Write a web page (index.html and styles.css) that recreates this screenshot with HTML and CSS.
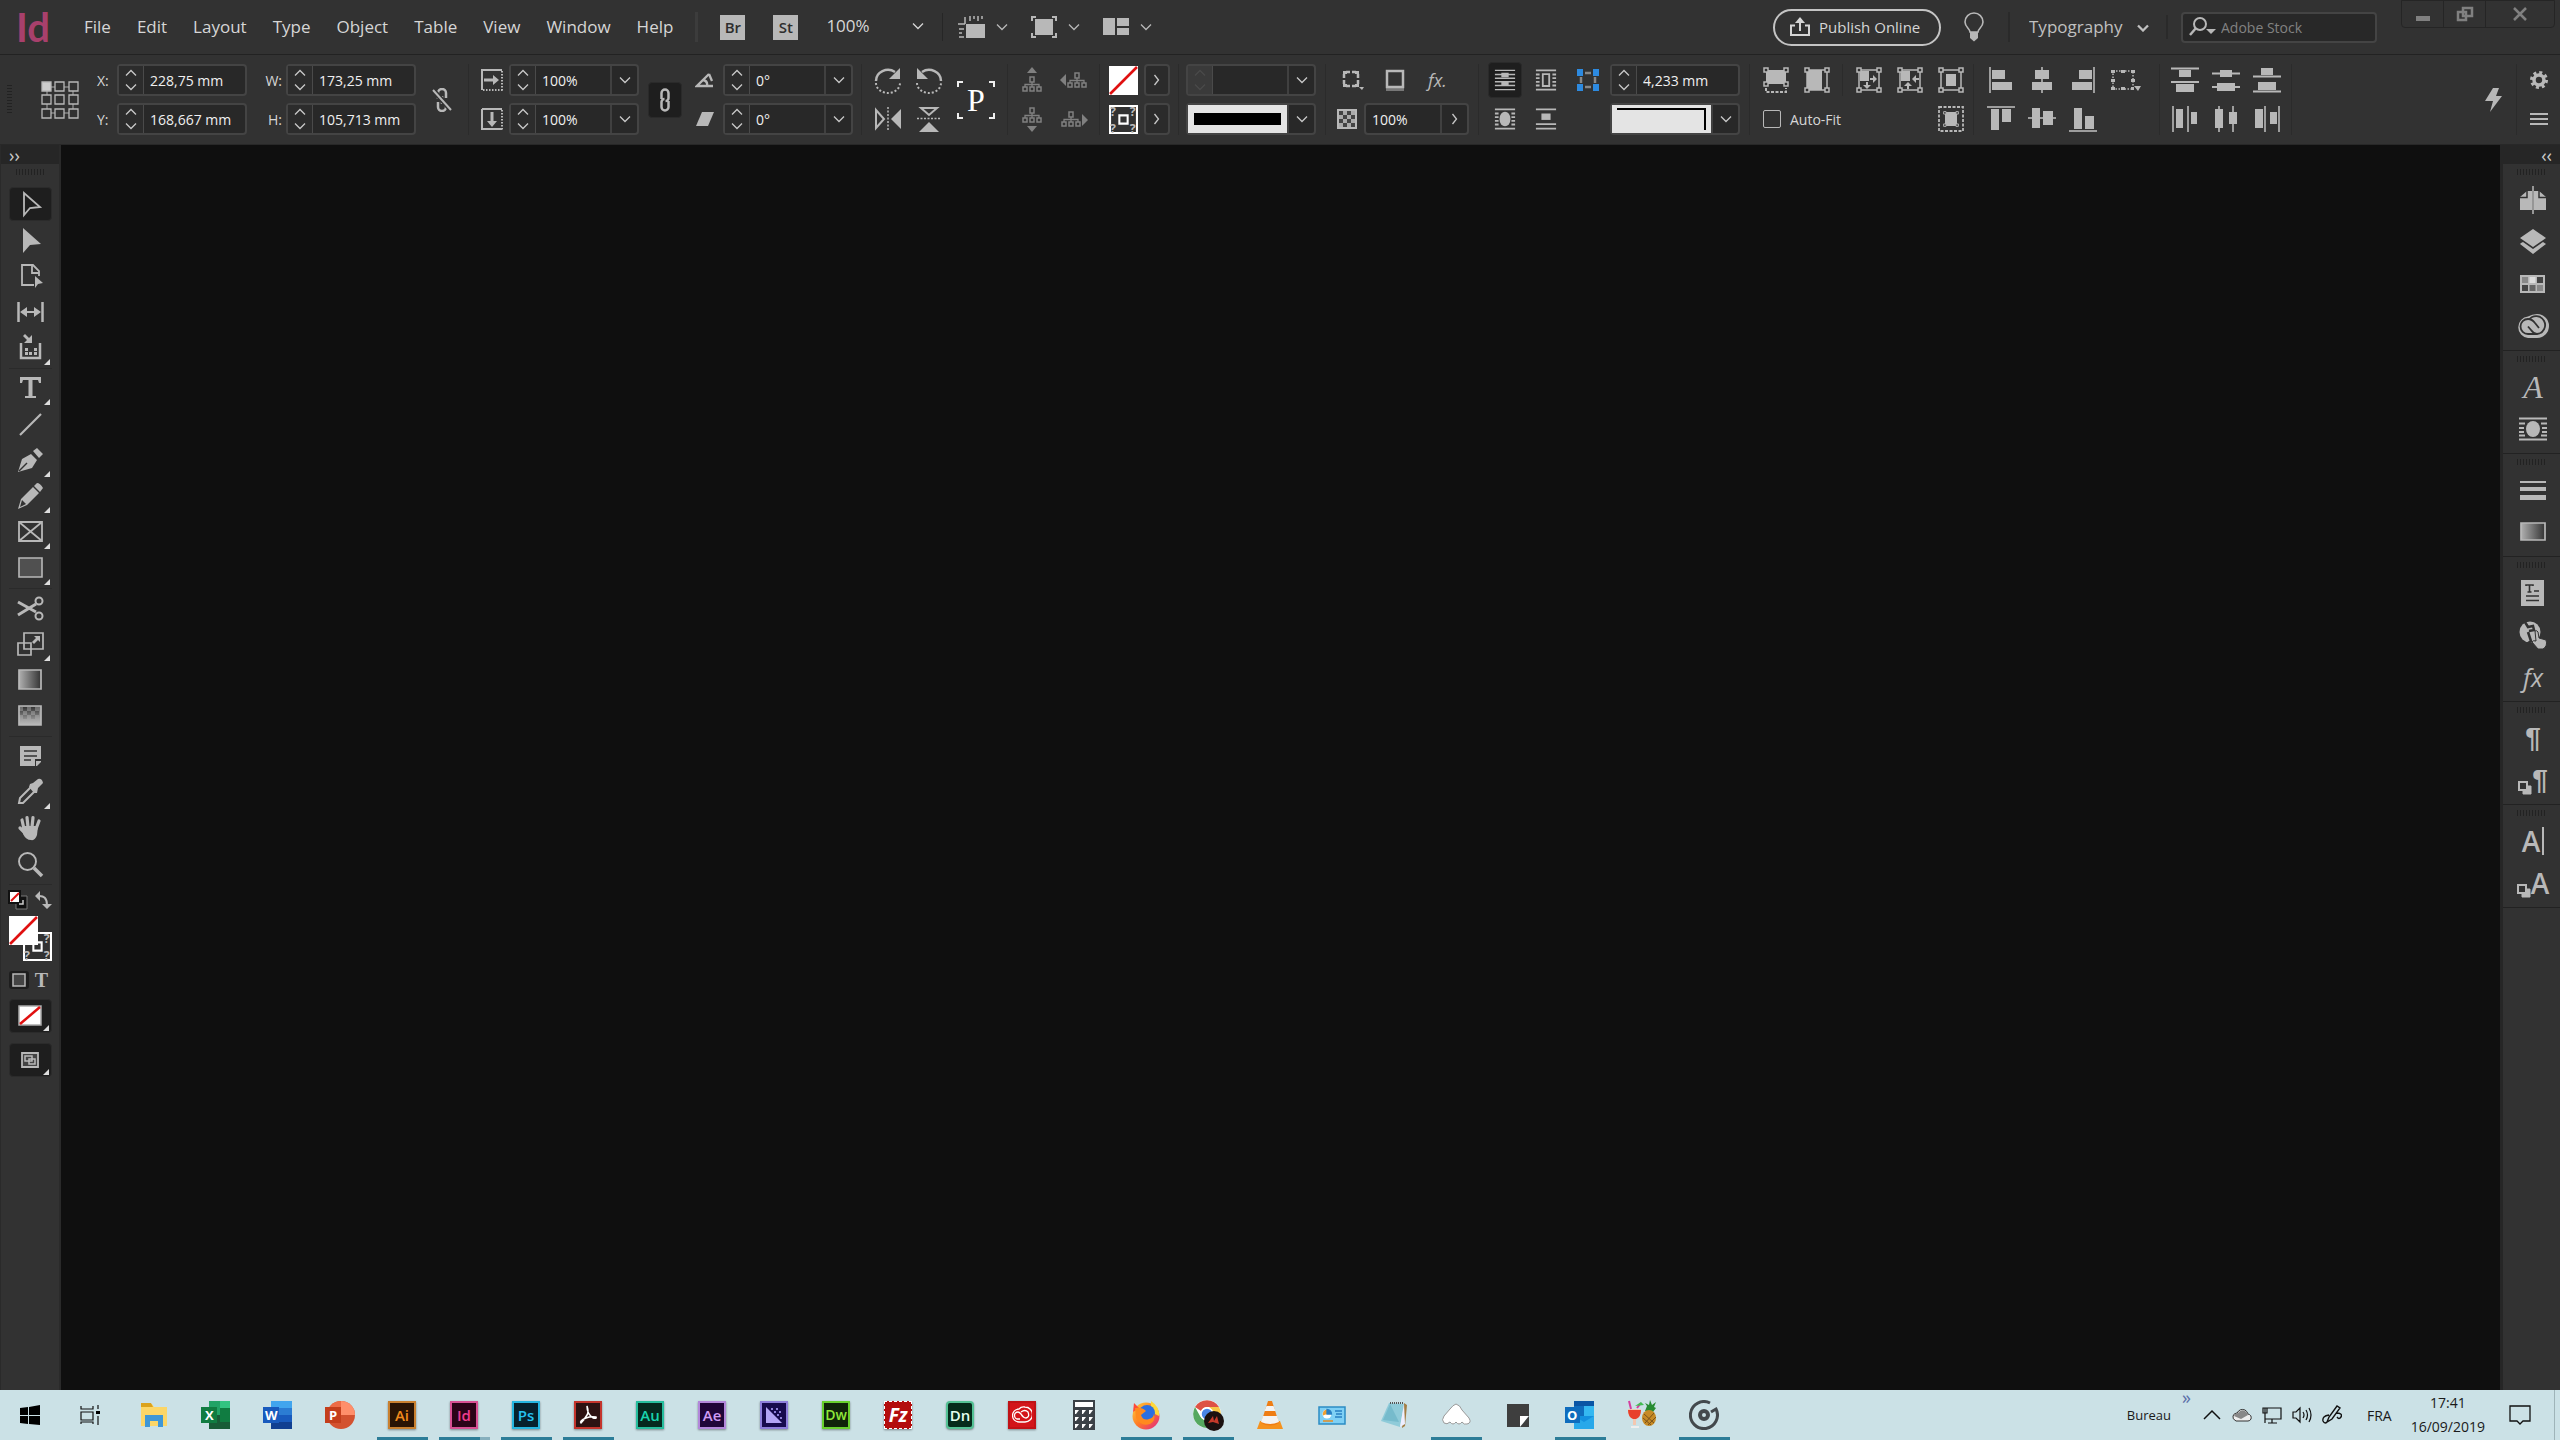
FILE: index.html
```html
<!DOCTYPE html>
<html lang="en">
<head>
    <meta charset="UTF-8">
    <meta name="viewport" content="width=device-width, initial-scale=1.0">
    <title>InDesign</title>
    <link rel="stylesheet" href="styles.css">
</head>
<body>
    <svg class="defs" aria-hidden="true">
        <defs>
            <linearGradient id="grad"><stop offset="0" stop-color="#b0b0b0"/><stop offset="1" stop-color="#333"/></linearGradient>
            <linearGradient id="grad-v" x2="0" y2="1"><stop offset="0" stop-color="#bbb" stop-opacity="0"/><stop offset="1" stop-color="#bbb"/></linearGradient>
            <linearGradient id="fox" x2="1" y2="1"><stop offset="0" stop-color="#ffd23a"/><stop offset=".5" stop-color="#ff7a26"/><stop offset="1" stop-color="#e0218a"/></linearGradient>
        </defs>
        <symbol id="down" viewBox="0 0 12 8"><path d="M1 1.5l5 5 5-5" fill="none" stroke="currentColor" stroke-width="1.3"/></symbol>
        <symbol id="up" viewBox="0 0 12 8"><path d="M1 6.5l5-5 5 5" fill="none" stroke="currentColor" stroke-width="1.3"/></symbol>
        <symbol id="right" viewBox="0 0 8 12"><path d="M1.5 1l4 5-4 5" fill="none" stroke="currentColor" stroke-width="1.3"/></symbol>
        <symbol id="hierarchy" viewBox="0 0 20 16"><path d="M10 6v3M3 11V8.500h14V11M10 8v3" fill="none" stroke="currentColor" stroke-width="1.3"/><path d="M8 1h4v5H8zM1 11h4v4H1zM8 11h4v4H8zM15 11h4v4h-4z" fill="none" stroke="currentColor" stroke-width="1.5"/></symbol>
        <symbol id="wrap" viewBox="0 0 28 24"><path d="M0 1.500h28M0 22.500h28M0 6.500h6M22 6.500h6M0 11h5M23 11h5M0 15h5M23 15h5M0 18.500h6M22 18.500h6" stroke="currentColor" stroke-width="1.800"/><ellipse cx="14" cy="12" rx="7" ry="8" fill="currentColor"/></symbol>
        <symbol id="handles" viewBox="0 0 26 26"><path d="M1 1h4v4H1zM21 1h4v4h-4zM1 21h4v4H1zM21 21h4v4h-4z" fill="#323232" stroke="currentColor" stroke-width="1.5"/></symbol>
        <symbol id="corner-mark" viewBox="0 0 6 6"><path d="M6 0v6H0z" fill="#ddd"/></symbol>
        <symbol id="none" viewBox="0 0 28 28"><path d="M0 0h28v28H0z" fill="#fff"/><path d="M1 27L27 1" stroke="#e01010" stroke-width="2.500"/></symbol>
        <symbol id="page-squares" viewBox="0 0 14 14"><path d="M5 5h8v8H5z" fill="currentColor" stroke="currentColor"/><path d="M1 1h8v8H1z" fill="#323232" stroke="currentColor" stroke-width="2"/></symbol>
        <symbol id="cc" viewBox="0 0 32 24"><path d="M11 2.500Q15 0 20 0a12 12 0 1 1 0 24h-9a10.800 10.800 0 0 1 0-21.500z" fill="currentColor"/><path d="M20 20h-9a7.500 7.500 0 0 1 0-15q4 0 7 4l4 5M12 5.500A9 9 0 1 1 20 20q-3 0-6-4l-3-3.500" fill="none" stroke="#323232" stroke-width="1.800"/></symbol>
    </svg>

    <header class="menubar">
        <div class="logo">Id</div>
        <nav class="menu">
            <a href="#">File</a>
            <a href="#">Edit</a>
            <a href="#">Layout</a>
            <a href="#">Type</a>
            <a href="#">Object</a>
            <a href="#">Table</a>
            <a href="#">View</a>
            <a href="#">Window</a>
            <a href="#">Help</a>
        </nav>
        <div class="menu-tools">
            <button class="app-chip">Br</button>
            <button class="app-chip">St</button>
            <div class="select zoom">
                <select aria-label="Zoom level"><option>100%</option></select>
                <svg class="chev"><use href="#down"/></svg>
            </div>
        </div>
        <div class="view-tools">
            <button class="view-btn" aria-label="View options">
                <svg class="icon28" viewBox="0 0 28 28"><path d="M8 11h19v14H8z" fill="currentColor"/><path d="M7 4v7M12 3v5M16 3v3M20 3v5M24 3v3M0 11h7M1 16h5M1 20h3M1 24h5" stroke="currentColor" stroke-width="1.500"/></svg>
                <svg class="chev"><use href="#down"/></svg>
            </button>
            <button class="view-btn" aria-label="Screen mode">
                <svg class="icon28" viewBox="0 0 28 28"><path d="M5 6h18v16H5z" fill="currentColor"/><path d="M2 8V4h4M22 4h4v4M26 20v4h-4M6 24H2v-4" fill="none" stroke="currentColor" stroke-width="2"/></svg>
                <svg class="chev"><use href="#down"/></svg>
            </button>
            <button class="view-btn" aria-label="Arrange documents">
                <svg class="icon28" viewBox="0 0 28 28"><path d="M1 5h12v17H1zM15 5h12v8H15zM15 15h12v7H15z" fill="currentColor"/></svg>
                <svg class="chev"><use href="#down"/></svg>
            </button>
        </div>
        <div class="menu-right">
            <button class="publish">
                <svg class="icon20" viewBox="0 0 20 20"><path d="M5 8.500H1V18h18V8.500h-4M10 14V4" fill="none" stroke="currentColor" stroke-width="2"/><path d="M5 6l5-6 5 6z" fill="currentColor"/></svg>
                Publish Online
            </button>
            <button class="bulb" aria-label="Learn">
                <svg viewBox="0 0 20 30"><path d="M6 20c0-3-5-5-5-10a9 9 0 0 1 18 0c0 5-5 7-5 10z" fill="none" stroke="currentColor" stroke-width="1.600"/><path d="M6 20h8v6l-4 3.500L6 26z" fill="currentColor"/></svg>
            </button>
            <div class="select workspace-select">
                <select aria-label="Workspace"><option>Typography</option></select>
                <svg class="chev" viewBox="0 0 12 8"><path d="M1 1.500l5 5 5-5" fill="none" stroke="currentColor" stroke-width="2.300"/></svg>
            </div>
            <label class="search">
                <svg viewBox="0 0 28 20"><circle cx="11" cy="7" r="6" fill="none" stroke="currentColor" stroke-width="2"/><path d="M7 11l-6 7" stroke="currentColor" stroke-width="2.500"/><path d="M17 12h10l-5 5z" fill="currentColor"/></svg>
                <input type="search" placeholder="Adobe Stock" aria-label="Adobe Stock">
            </label>
            <div class="window-buttons">
                <button aria-label="Minimize"><svg viewBox="0 0 20 16"><path d="M3 10h14v5H3z" fill="currentColor"/></svg></button>
                <button aria-label="Restore"><svg viewBox="0 0 20 16"><path d="M8 2h9v8H8zM3 6h8v8H3z" fill="none" stroke="currentColor" stroke-width="2.500"/></svg></button>
                <button aria-label="Close"><svg viewBox="0 0 20 16"><path d="M4 2l12 12M16 2L4 14" stroke="currentColor" stroke-width="2.500"/></svg></button>
            </div>
        </div>
    </header>

    <section class="control">
        <div class="group position">
            <span class="grip-v tall"></span>
            <svg class="tall ref-point" viewBox="0 0 38 38"><path d="M6 6h26v26H6z" fill="none" stroke="#aaa"/><g fill="#323232" stroke="#b8b8b8" stroke-width="1.300"><path d="M1 1h9v9H1z" fill="#ccc"/><path d="M14 1h9v9h-9zM28 1h9v9h-9zM1 14h9v9H1zM14 14h9v9h-9zM28 14h9v9h-9zM1 28h9v9H1zM14 28h9v9h-9zM28 28h9v9h-9z"/></g></svg>
            <label for="x">X:</label>
            <div class="field"><span class="spin"><button aria-label="Increase"><svg><use href="#up"/></svg></button><button aria-label="Decrease"><svg><use href="#down"/></svg></button></span><input id="x" value="228,75 mm"></div>
            <label for="w" class="end">W:</label>
            <div class="field"><span class="spin"><button aria-label="Increase"><svg><use href="#up"/></svg></button><button aria-label="Decrease"><svg><use href="#down"/></svg></button></span><input id="w" value="173,25 mm"></div>
            <button class="tall flat" aria-label="Constrain proportions"><svg class="icon24" viewBox="0 0 24 24"><path d="M8 11V5a4 4 0 0 1 8 0v5M8 14v5a4 4 0 0 0 8 0v-4M12 8v8" fill="none" stroke="currentColor" stroke-width="2.500"/><path d="M3 2l18 20" stroke="#323232" stroke-width="5"/><path d="M3 2l18 20" stroke="currentColor" stroke-width="2"/></svg></button>
            <label for="y">Y:</label>
            <div class="field"><span class="spin"><button aria-label="Increase"><svg><use href="#up"/></svg></button><button aria-label="Decrease"><svg><use href="#down"/></svg></button></span><input id="y" value="168,667 mm"></div>
            <label for="h" class="end">H:</label>
            <div class="field"><span class="spin"><button aria-label="Increase"><svg><use href="#up"/></svg></button><button aria-label="Decrease"><svg><use href="#down"/></svg></button></span><input id="h" value="105,713 mm"></div>
        </div>

        <div class="group scale">
            <svg class="icon22" viewBox="0 0 22 22"><path d="M21 1H1v20" fill="none" stroke="currentColor" stroke-width="2"/><path d="M21 2v20M2 21h20" stroke="currentColor" stroke-width="2" stroke-dasharray="1.500 1.500"/><path d="M3 9.500h9V6l6 5-6 5v-3.500H3z" fill="currentColor"/></svg>
            <div class="field"><span class="spin"><button aria-label="Increase"><svg><use href="#up"/></svg></button><button aria-label="Decrease"><svg><use href="#down"/></svg></button></span><input aria-label="Scale X" value="100%"><button class="drop" aria-label="Presets"><svg class="chev"><use href="#down"/></svg></button></div>
            <button class="tall toggled link" aria-label="Link scale"><svg class="icon24" viewBox="0 0 24 24"><path d="M8.500 11V5a3.500 3.500 0 0 1 7 0v5a3 3 0 0 1-3 3M15.500 13v6a3.500 3.500 0 0 1-7 0v-5a3 3 0 0 1 3-3" fill="none" stroke="currentColor" stroke-width="2.500"/></svg></button>
            <svg class="icon20" viewBox="0 0 20 20"><path d="M14 4L2 16h16M8 10q5 1 4 6M14 4l3 7" fill="none" stroke="currentColor" stroke-width="2.300"/></svg>
            <div class="field"><span class="spin"><button aria-label="Increase"><svg><use href="#up"/></svg></button><button aria-label="Decrease"><svg><use href="#down"/></svg></button></span><input aria-label="Rotation" value="0°"><button class="drop" aria-label="Presets"><svg class="chev"><use href="#down"/></svg></button></div>
            <svg class="icon22" viewBox="0 0 22 22"><path d="M1 1h20M1 1v20h20" fill="none" stroke="currentColor" stroke-width="2"/><path d="M21 2v20" stroke="currentColor" stroke-width="2" stroke-dasharray="1.500 1.500"/><path d="M9.500 4v9H6l5 6 5-6h-3.500V4z" fill="currentColor"/></svg>
            <div class="field"><span class="spin"><button aria-label="Increase"><svg><use href="#up"/></svg></button><button aria-label="Decrease"><svg><use href="#down"/></svg></button></span><input aria-label="Scale Y" value="100%"><button class="drop" aria-label="Presets"><svg class="chev"><use href="#down"/></svg></button></div>
            <svg class="icon20" viewBox="0 0 20 20"><path d="M7 3h12l-6 14H1z" fill="currentColor"/></svg>
            <div class="field"><span class="spin"><button aria-label="Increase"><svg><use href="#up"/></svg></button><button aria-label="Decrease"><svg><use href="#down"/></svg></button></span><input aria-label="Shear" value="0°"><button class="drop" aria-label="Presets"><svg class="chev"><use href="#down"/></svg></button></div>
        </div>

        <div class="group transform">
            <button class="flat" aria-label="Rotate clockwise"><svg class="icon28" viewBox="0 0 28 28"><path d="M2 15A12 11 0 0 1 21 6" fill="none" stroke="currentColor" stroke-width="2.500"/><path d="M26 2v11H15z" fill="currentColor"/><path d="M2 17a12 10 0 0 0 24 0" fill="none" stroke="currentColor" stroke-width="2" stroke-dasharray="2 2"/></svg></button>
            <button class="flat" aria-label="Rotate counterclockwise"><svg class="icon28" viewBox="0 0 28 28"><path d="M26 15A12 11 0 0 0 7 6" fill="none" stroke="currentColor" stroke-width="2.500"/><path d="M2 2v11h11z" fill="currentColor"/><path d="M2 17a12 10 0 0 0 24 0" fill="none" stroke="currentColor" stroke-width="2" stroke-dasharray="2 2"/></svg></button>
            <div class="tall proxy">P</div>
            <button class="flat" aria-label="Flip horizontal"><svg class="icon28" viewBox="0 0 28 28"><path d="M2 5l8 9-8 9z" fill="none" stroke="currentColor" stroke-width="2"/><path d="M27 4v20L17 14z" fill="currentColor"/><path d="M14 2v24" stroke="currentColor" stroke-width="1.500" stroke-dasharray="2 1.500"/></svg></button>
            <button class="flat" aria-label="Flip vertical"><svg class="icon28" viewBox="0 0 28 28"><path d="M6 3h16l-8 7z" fill="none" stroke="currentColor" stroke-width="2"/><path d="M4 27h20l-10-10z" fill="currentColor"/><path d="M2 13.500h24" stroke="currentColor" stroke-width="1.500" stroke-dasharray="2 1.500"/></svg></button>
        </div>

        <div class="group hierarchy dim">
            <svg class="icon28" viewBox="0 0 28 28"><path d="M9 7h10l-5-6z" fill="currentColor"/><use href="#hierarchy" x="4" y="10" width="20" height="16"/></svg>
            <svg class="icon28" viewBox="0 0 28 28"><path d="M6 8v12l-6-6z" fill="currentColor"/><use href="#hierarchy" x="7" y="6" width="20" height="16"/></svg>
            <svg class="icon28" viewBox="0 0 28 28"><path d="M9 21h10l-5 6z" fill="currentColor"/><use href="#hierarchy" x="4" y="2" width="20" height="16"/></svg>
            <svg class="icon28" viewBox="0 0 28 28"><path d="M22 9v12l6-6z" fill="currentColor"/><use href="#hierarchy" x="1" y="6" width="20" height="16"/></svg>
        </div>

        <div class="group fill">
            <button class="swatch" aria-label="Fill"><svg><use href="#none"/></svg></button>
            <button class="box" aria-label="Fill options"><svg class="chev-r"><use href="#right"/></svg></button>
            <button class="swatch" aria-label="Stroke"><svg class="mixed" viewBox="0 0 28 28"><path d="M1 1h26v26H1zM10 10h8v8h-8z"/><text x="1" y="11">?</text><text x="20" y="11">?</text><text x="1" y="27">?</text><text x="20" y="27">?</text></svg></button>
            <button class="box" aria-label="Stroke options"><svg class="chev-r"><use href="#right"/></svg></button>
        </div>

        <div class="group stroke">
            <div class="field off"><span class="spin"><button aria-label="Increase" disabled><svg><use href="#up"/></svg></button><button aria-label="Decrease" disabled><svg><use href="#down"/></svg></button></span><input aria-label="Stroke weight" value=""><button class="drop" aria-label="Presets"><svg class="chev"><use href="#down"/></svg></button></div>
            <div class="field"><button class="preview line" aria-label="Stroke type"><span></span></button><button class="drop" aria-label="Stroke types"><svg class="chev"><use href="#down"/></svg></button></div>
        </div>

        <div class="group effects">
            <div class="row">
                <button class="flat" aria-label="Corner options"><svg class="icon24" viewBox="0 0 24 24"><path d="M6 4h4M12 4h4M4 6v4M4 12v4M18 6v4M18 12v4M6 18h4M12 18h4" stroke="currentColor" stroke-width="2.500"/><path d="M3 3h4v3H3zM15 3h4v3h-4zM3 16h4v3H3zM15 16h4v3h-4zM19 19h5l-2 3z" fill="currentColor"/></svg></button>
                <button class="flat" aria-label="Drop shadow"><svg class="icon24" viewBox="0 0 24 24"><path d="M3 17h18v6H3z" fill="#777"/><path d="M4 3h16v16H4z" fill="#323232" stroke="currentColor" stroke-width="2.500"/></svg></button>
                <button class="flat fx" aria-label="Effects">fx.</button>
            </div>
            <div class="row">
                <svg class="icon20 checker" viewBox="0 0 20 20"><path d="M1 1h18v18H1z" fill="#444" stroke="currentColor" stroke-width="2"/><path d="M6 2h4v4H6zM14 2h4v4h-4zM2 6h4v4H2zM10 6h4v4h-4zM6 10h4v4H6zM14 10h4v4h-4zM2 14h4v4H2zM10 14h4v4h-4z" fill="#aaa"/></svg>
                <div class="field opacity"><input aria-label="Opacity" value="100%"><button class="drop" aria-label="Opacity slider"><svg class="chev-r"><use href="#right"/></svg></button></div>
            </div>
        </div>

        <div class="group wrap">
            <button class="toggled" aria-label="No text wrap"><svg class="icon22" viewBox="0 0 22 24"><path d="M0 1.500h22M0 6h22M0 10h22M0 14h22M0 18h22M0 22.500h22" stroke="currentColor" stroke-width="1.600"/><path d="M7 4h8v5H7zM7 13h8v5H7z" fill="currentColor"/></svg></button>
            <button class="flat" aria-label="Wrap around bounding box"><svg class="icon22" viewBox="0 0 22 24"><path d="M0 1.500h22M0 22.500h22M0 6h4M18 6h4M0 10h4M18 10h4M0 14h4M18 14h4M0 18h4M18 18h4" stroke="currentColor" stroke-width="2"/><path d="M7.500 5.500h7v13h-7z" fill="none" stroke="currentColor" stroke-width="2"/></svg></button>
            <svg class="icon22" viewBox="0 0 22 22"><path d="M0 0h6v7H0zM16 0h6v7h-6zM0 15h6v7H0zM16 15h6v7h-6z" fill="#2d8ae0"/><path d="M8 4h6M8 18h6M4 8v6M18 8v6" stroke="#888" stroke-width="2.500"/></svg>
            <div class="field"><span class="spin"><button aria-label="Increase"><svg><use href="#up"/></svg></button><button aria-label="Decrease"><svg><use href="#down"/></svg></button></span><input aria-label="Corner size" value="4,233 mm"></div>
            <button class="flat" aria-label="Wrap around shape"><svg class="icon22" viewBox="0 0 22 24"><path d="M0 1.500h22M0 22.500h22M0 6h4M18 6h4M0 10h4M18 10h4M0 14h4M18 14h4M0 18h4M18 18h4" stroke="currentColor" stroke-width="2"/><ellipse cx="11" cy="12" rx="6" ry="8" fill="currentColor"/></svg></button>
            <button class="flat" aria-label="Jump object"><svg class="icon22" viewBox="0 0 22 24"><path d="M0 1.500h22M0 17.500h22M0 22.500h22" stroke="currentColor" stroke-width="2"/><path d="M6 6h10v7H6z" fill="currentColor"/></svg></button>
            <span></span>
            <div class="field"><button class="preview corner" aria-label="Corner shape"><span></span></button><button class="drop" aria-label="Corner shapes"><svg class="chev"><use href="#down"/></svg></button></div>
        </div>

        <div class="group fit">
            <div class="row">
                <button class="flat" aria-label="Fill frame"><svg class="icon26" viewBox="0 0 26 26"><path d="M3 3h20v14H3z" fill="currentColor"/><path d="M3 21v4h20v-4" fill="none" stroke="currentColor" stroke-width="2" stroke-dasharray="3 1.500"/><path d="M1 1h4v4H1zM21 1h4v4h-4zM1 15h4v4H1zM21 15h4v4h-4z" fill="#323232" stroke="currentColor" stroke-width="1.500"/></svg></button>
                <button class="flat" aria-label="Fit content"><svg class="icon26" viewBox="0 0 26 26"><path d="M3 3h15v20H3z" fill="currentColor"/><path d="M3 3h20v20H3z" fill="none" stroke="currentColor" stroke-width="1.500"/><use href="#handles" width="26" height="26"/></svg></button>
                <span class="mini-sep"></span>
                <button class="flat" aria-label="Fit content to frame"><svg class="icon26" viewBox="0 0 26 26"><path d="M3 3h20v20H3z" fill="none" stroke="currentColor" stroke-width="1.500"/><path d="M4 4h9v10H4zM14 11h3V8l4 4-4 4v-3h-3zM10 15v3H7l4 4 4-4h-3v-3z" fill="currentColor"/><use href="#handles" width="26" height="26"/></svg></button>
                <button class="flat" aria-label="Fit frame to content"><svg class="icon26" viewBox="0 0 26 26"><path d="M3 3h20v20H3z" fill="none" stroke="currentColor" stroke-width="1.500"/><path d="M4 4h9v10H4zM22 11h-3V8l-4 4 4 4v-3h3zM10 22v-3H7l4-4 4 4h-3v3z" fill="currentColor"/><use href="#handles" width="26" height="26"/></svg></button>
                <button class="flat" aria-label="Center content"><svg class="icon26" viewBox="0 0 26 26"><path d="M3 3h20v20H3z" fill="none" stroke="currentColor" stroke-width="1.500"/><path d="M8 7h10v12H8z" fill="currentColor"/><use href="#handles" width="26" height="26"/></svg></button>
            </div>
            <div class="row">
                <label class="autofit"><input type="checkbox"> Auto-Fit</label>
                <button class="flat" aria-label="Content-aware fit"><svg class="icon26" viewBox="0 0 26 26"><path d="M1 1h24v24H1z" fill="none" stroke="currentColor" stroke-width="1.800" stroke-dasharray="3 1.500"/><path d="M7 6h12v14H7z" fill="currentColor"/><use href="#handles" x="5" y="5" width="16" height="16"/></svg></button>
            </div>
        </div>

        <div class="group align">
            <button class="flat" aria-label="Align left"><svg class="icon28" viewBox="0 0 28 28"><path d="M3 1v26" stroke="currentColor" stroke-width="1.600"/><path d="M5 4h13v9H5zM5 16h20v8H5z" fill="currentColor"/></svg></button>
            <button class="flat" aria-label="Align center"><svg class="icon28" viewBox="0 0 28 28"><path d="M14 1v26" stroke="currentColor" stroke-width="1.600"/><path d="M7 4h14v9H7zM4 16h20v8H4z" fill="currentColor"/></svg></button>
            <button class="flat" aria-label="Align right"><svg class="icon28" viewBox="0 0 28 28"><path d="M25 1v26" stroke="currentColor" stroke-width="1.600"/><path d="M10 4h13v9H10zM3 16h20v8H3z" fill="currentColor"/></svg></button>
            <button class="flat" aria-label="Align to"><svg class="icon30" viewBox="0 0 30 28"><path d="M2 5h20v18H2z" fill="none" stroke="currentColor" stroke-width="1.500" stroke-dasharray="1.500 1.500"/><path d="M0 4h4v3H0zM10 4h4v3h-4zM20 4h4v3h-4zM0 13h4v3H0zM20 13h4v3h-4zM0 21h4v3H0zM10 21h4v3h-4zM20 21h3v3h-3zM23 20h7l-3 5z" fill="currentColor"/></svg></button>
            <button class="flat" aria-label="Align top"><svg class="icon28" viewBox="0 0 28 28"><path d="M0 2h28" stroke="currentColor" stroke-width="1.600"/><path d="M4 4h8v21H4zM15 4h9v13h-9z" fill="currentColor"/></svg></button>
            <button class="flat" aria-label="Align middle"><svg class="icon28" viewBox="0 0 28 28"><path d="M0 13h28" stroke="currentColor" stroke-width="1.600"/><path d="M4 3h8v20H4zM15 6h10v14H15z" fill="currentColor"/></svg></button>
            <button class="flat" aria-label="Align bottom"><svg class="icon28" viewBox="0 0 28 28"><path d="M0 26h28" stroke="currentColor" stroke-width="1.600"/><path d="M5 3h8v21H5zM16 11h9v13h-9z" fill="currentColor"/></svg></button>
        </div>

        <div class="group distribute">
            <button class="flat" aria-label="Distribute top"><svg class="icon28" viewBox="0 0 28 28"><path d="M0 2.500h28M0 16h28" stroke="currentColor" stroke-width="1.800"/><path d="M8 4h12v7H8zM5 18h18v8H5z" fill="currentColor"/></svg></button>
            <button class="flat" aria-label="Distribute middle"><svg class="icon28" viewBox="0 0 28 28"><path d="M0 7.500h28M0 21h28" stroke="currentColor" stroke-width="1.800"/><path d="M8 4h12v7H8zM5 17h18v8H5z" fill="currentColor"/></svg></button>
            <button class="flat" aria-label="Distribute bottom"><svg class="icon28" viewBox="0 0 28 28"><path d="M0 10.500h28M0 25.500h28" stroke="currentColor" stroke-width="1.800"/><path d="M8 2h12v7H8zM5 16h18v8H5z" fill="currentColor"/></svg></button>
            <button class="flat" aria-label="Distribute left"><svg class="icon28" viewBox="0 0 28 28"><path d="M2 1v26M17 1v26" stroke="currentColor" stroke-width="1.600"/><path d="M5 4h7v19H5zM20 7h6v12h-6z" fill="currentColor"/></svg></button>
            <button class="flat" aria-label="Distribute center"><svg class="icon28" viewBox="0 0 28 28"><path d="M7 1v26M21 1v26" stroke="currentColor" stroke-width="1.600"/><path d="M3 4h8v19H3zM17 7h8v12h-8z" fill="currentColor"/></svg></button>
            <button class="flat" aria-label="Distribute right"><svg class="icon28" viewBox="0 0 28 28"><path d="M12 1v26M26 1v26" stroke="currentColor" stroke-width="1.600"/><path d="M2 4h8v19H2zM17 7h7v12h-7z" fill="currentColor"/></svg></button>
        </div>

        <div class="group quick">
            <button class="tall flat" aria-label="Quick apply"><svg class="icon24" viewBox="0 0 24 24"><path d="M12 0h6l-3 8h6L9 24l3-11H4z" fill="currentColor"/></svg></button>
        </div>
        <div class="group settings">
            <button class="flat" aria-label="Customize control panel"><svg class="icon20" viewBox="0 0 20 20"><circle cx="10" cy="10" r="5" fill="none" stroke="currentColor" stroke-width="3.500"/><circle cx="10" cy="10" r="7.500" fill="none" stroke="currentColor" stroke-width="3" stroke-dasharray="3 2.890"/></svg></button>
            <button class="flat" aria-label="Panel menu"><svg class="icon20" viewBox="0 0 20 20"><path d="M1 5h18M1 10h18M1 15h18" stroke="currentColor" stroke-width="2"/></svg></button>
        </div>
    </section>

    <div class="middle">
        <aside class="tools">
            <button class="panel-head">››</button>
            <span class="grip"></span>
            <div class="tool-group">
                <button class="tool on" aria-label="Selection"><svg class="icon28" viewBox="0 0 28 28"><path d="M8 3v22l6-7 10-1z" fill="none" stroke="currentColor" stroke-width="1.800"/></svg></button>
                <button class="tool" aria-label="Direct selection"><svg class="icon28" viewBox="0 0 28 28"><path d="M7 2v25l7-8 11-1z" fill="currentColor"/></svg></button>
                <button class="tool" aria-label="Page"><svg class="icon28" viewBox="0 0 28 28"><path d="M18 23H6V3h11l6 6v5M16 3v8h7" fill="none" stroke="currentColor" stroke-width="1.800"/><path d="M19 14v12l3-4 5-1z" fill="currentColor"/></svg></button>
                <button class="tool" aria-label="Gap"><svg class="icon28" viewBox="0 0 28 28"><path d="M2.500 4v20M26.500 4v20" stroke="currentColor" stroke-width="2.500"/><path d="M8 14h14" stroke="currentColor" stroke-width="2"/><path d="M11 9v10l-7-5zM18 9v10l7-5z" fill="currentColor"/></svg></button>
                <button class="tool" aria-label="Content collector"><svg class="icon28" viewBox="0 0 28 28"><path d="M5 9v15h19V9" fill="none" stroke="currentColor" stroke-width="2.500"/><path d="M9 14h3v3H9zM18 14h3v3h-3zM9 18h3v3H9zM13 18h3v3h-3zM18 18h3v3h-3zM16 9H8l3-3-4-4 2-2 4 4 3-3z" fill="currentColor"/></svg><svg class="mark"><use href="#corner-mark"/></svg></button>
            </div>
            <div class="tool-group">
                <button class="tool" aria-label="Type"><svg class="icon28" viewBox="0 0 28 28"><path d="M4 3h21v6h-2l-1-3h-5.500v16H20v2h-11v-2h3.500V6H7L6 9H4z" fill="currentColor"/></svg><svg class="mark"><use href="#corner-mark"/></svg></button>
                <button class="tool" aria-label="Line"><svg class="icon28" viewBox="0 0 28 28"><path d="M4 25L25 4" stroke="currentColor" stroke-width="2.200"/></svg></button>
                <button class="tool" aria-label="Pen"><svg class="icon28" viewBox="0 0 28 28"><path d="M2 26l4-13 9-5 6 6-5 8zM17 5l4-3 6 6-4 4z" fill="currentColor"/><path d="M3 25l8-8" stroke="#323232" stroke-width="1.500"/></svg><svg class="mark"><use href="#corner-mark"/></svg></button>
                <button class="tool" aria-label="Pencil"><svg class="icon28" viewBox="0 0 28 28"><path d="M2 27l3-10L17 5l6 6-12 12zM18 4l3-3q3 0 6 5l-3 4z" fill="currentColor"/><path d="M6 18l4 4-6 3z" fill="#323232"/></svg><svg class="mark"><use href="#corner-mark"/></svg></button>
                <button class="tool" aria-label="Rectangle frame"><svg class="icon28" viewBox="0 0 28 28"><path d="M3 4h23v19H3zL26 23M26 4L3 23" fill="none" stroke="currentColor" stroke-width="1.800"/></svg><svg class="mark"><use href="#corner-mark"/></svg></button>
                <button class="tool" aria-label="Rectangle"><svg class="icon28" viewBox="0 0 28 28"><path d="M3 4h23v19H3z" fill="#505050" stroke="currentColor" stroke-width="1.600"/></svg><svg class="mark"><use href="#corner-mark"/></svg></button>
            </div>
            <div class="tool-group">
                <button class="tool" aria-label="Scissors"><svg class="icon28" viewBox="0 0 28 28"><path d="M2 8l18 10M2 21L20 10" stroke="currentColor" stroke-width="3"/><circle cx="23" cy="7" r="3.500" fill="none" stroke="currentColor" stroke-width="2"/><circle cx="23" cy="22" r="3.500" fill="none" stroke="currentColor" stroke-width="2"/></svg></button>
                <button class="tool" aria-label="Free transform"><svg class="icon28" viewBox="0 0 28 28"><path d="M8 3h19v16H8zM2 13h13v12H2z" fill="none" stroke="currentColor" stroke-width="1.700"/><path d="M18 6h6v6l-2-2-4 4-2-2 4-4z" fill="currentColor"/></svg><svg class="mark"><use href="#corner-mark"/></svg></button>
                <button class="tool" aria-label="Gradient swatch"><svg class="icon28" viewBox="0 0 28 28"><path d="M3 4h22v19H3z" fill="url(#grad)" stroke="currentColor" stroke-width="1.700"/></svg></button>
                <button class="tool" aria-label="Gradient feather"><svg class="icon28" viewBox="0 0 28 28"><path d="M3 4h22v19H3z" fill="#666"/><path d="M7 5h4v4H7zM15 5h4v4h-4zM3 9h4v4H3zM11 9h4v4h-4zM19 9h4v4h-4zM7 13h4v4H7zM15 13h4v4h-4z" fill="#2e2e2e"/><path d="M3 4h22v19H3z" fill="url(#grad-v)" stroke="currentColor" stroke-width="1.700"/></svg></button>
            </div>
            <div class="tool-group">
                <button class="tool" aria-label="Note"><svg class="icon28" viewBox="0 0 28 28"><path d="M4 4h21v13h-6v7H4zM25 19v1l-4 4h-1v-5z" fill="currentColor"/><path d="M8 9h13M8 14h13M8 18h7" stroke="#323232" stroke-width="1.600"/></svg></button>
                <button class="tool" aria-label="Eyedropper"><svg class="icon28" viewBox="0 0 28 28"><path d="M15 9L4 20l-1 5 4 0L19 13" fill="none" stroke="currentColor" stroke-width="2"/><path d="M14 6l3-1 5-4q4-1 5 4l-5 5-1 5-3 0-5-6z" fill="currentColor"/></svg><svg class="mark"><use href="#corner-mark"/></svg></button>
                <button class="tool" aria-label="Hand"><svg class="icon28" viewBox="0 0 28 28"><path d="M8 15L6 6M12 13l-1-9.500M16 13l1-9.500M20 15l3-8M9 19l-5-5" stroke="currentColor" stroke-width="3.200" stroke-linecap="round"/><path d="M6 12h16l-1 9q-2 6-6 5-5 0-8-6z" fill="currentColor"/></svg></button>
                <button class="tool" aria-label="Zoom"><svg class="icon28" viewBox="0 0 28 28"><circle cx="11.500" cy="11.500" r="8.500" fill="none" stroke="currentColor" stroke-width="1.900"/><path d="M18 18l8 8" stroke="currentColor" stroke-width="3.500"/></svg></button>
            </div>
            <div class="swatch-mini">
                <button class="flat" aria-label="Default fill and stroke"><svg class="icon20" viewBox="0 0 20 20"><path d="M8 6h11v13H8z" fill="#111" stroke="#777"/><path d="M1 1h11v12H1z" fill="#fff" stroke="#111" stroke-width="2"/><path d="M3 11l8-8" stroke="#e01010" stroke-width="2"/><path d="M11 14h4v-4" fill="none" stroke="#ccc" stroke-width="1.500"/></svg></button>
                <button class="flat" aria-label="Swap fill and stroke"><svg class="icon20" viewBox="0 0 20 20"><path d="M5 6q9-1 9 9" fill="none" stroke="currentColor" stroke-width="2"/><path d="M7 1v10L2 6zM9 14h10l-5 5z" fill="currentColor"/></svg></button>
            </div>
            <div class="swatch-stack">
                <svg class="mixed stroke-sw" viewBox="0 0 28 28"><path d="M1 1h26v26H1zM10 10h8v8h-8z"/><text x="20" y="11">?</text><text x="1" y="27">?</text><text x="20" y="27">?</text></svg>
                <svg class="fill-sw"><use href="#none"/></svg>
            </div>
            <div class="format-row">
                <button class="format on" aria-label="Formatting affects container"><svg class="icon14" viewBox="0 0 14 14"><path d="M1 1h12v12H1z" fill="#444" stroke="currentColor" stroke-width="1.500"/></svg></button>
                <button class="format letter">T</button>
            </div>
            <button class="tool on apply" aria-label="Apply none"><svg class="icon24" viewBox="0 0 24 24"><path d="M1 2h22v19H1z" fill="#fff" stroke="#aaa" stroke-width="1.500"/><path d="M2 20L22 3" stroke="#e01010" stroke-width="2.500"/></svg><svg class="mark"><use href="#corner-mark"/></svg></button>
            <button class="tool on" aria-label="Screen mode"><svg class="icon20" viewBox="0 0 20 20"><path d="M2 3h16v14H2z" fill="#444" stroke="currentColor" stroke-width="1.800"/><path d="M5 6h7v5H5zM9 9h6v5H9z" fill="none" stroke="currentColor" stroke-width="1.500"/></svg><svg class="mark"><use href="#corner-mark"/></svg></button>
        </aside>

        <main class="canvas"></main>

        <aside class="panels">
            <button class="panel-head">‹‹</button>
            <div class="panel-group">
                <span class="grip"></span>
                <button class="panel" aria-label="Pages"><svg class="icon28" viewBox="0 0 28 28"><path d="M1 11l7-6h5v19H1zM27 11l-7-6h-5v19h12z" fill="currentColor"/><path d="M1 11.500h7V5M27 11.500h-7V5" fill="none" stroke="#323232" stroke-width="1.500"/><path d="M14 0v28" stroke="currentColor" stroke-width="1.500"/></svg></button>
                <button class="panel" aria-label="Layers"><svg class="icon28" viewBox="0 0 28 28"><path d="M14 1l13 9-13 9L1 10zM2 15l2-1 10 7 10-7 3 2-13 10L1 16z" fill="currentColor"/></svg></button>
                <button class="panel" aria-label="Swatches"><svg class="icon28" viewBox="0 0 28 28"><path d="M1 5h25v18H1z" fill="currentColor"/><path d="M3 7h6v6H3zM18 15h6v6h-6z" fill="#888"/><path d="M18 7h6v6h-6zM3 15h6v6H3z" fill="#444"/><path d="M10.500 15h6v6h-6z" fill="#666"/><path d="M10.500 7h6v6h-6z" fill="#ddd"/></svg></button>
                <button class="panel" aria-label="CC Libraries"><svg class="icon32"><use href="#cc"/></svg></button>
            </div>
            <div class="panel-group">
                <span class="grip"></span>
                <button class="panel script" aria-label="Glyphs">A</button>
                <button class="panel" aria-label="Text wrap"><svg class="icon28"><use href="#wrap"/></svg></button>
            </div>
            <div class="panel-group">
                <span class="grip"></span>
                <button class="panel" aria-label="Stroke"><svg class="icon28" viewBox="0 0 28 28"><path d="M1 5h26v2H1zM1 11h26v4H1zM1 19h26v5H1z" fill="currentColor"/></svg></button>
                <button class="panel" aria-label="Gradient"><svg class="icon28" viewBox="0 0 28 28"><path d="M2 5h24v17H2z" fill="url(#grad)" stroke="currentColor" stroke-width="1.700"/></svg></button>
            </div>
            <div class="panel-group">
                <span class="grip"></span>
                <button class="panel" aria-label="Articles"><svg class="icon28" viewBox="0 0 28 28"><path d="M2 1h23v26H2z" fill="currentColor"/><path d="M7 17h13M7 21.500h13M15 12h5M7 7V6h7v1M10.500 6v7M8.500 13h4" fill="none" stroke="#323232" stroke-width="1.600"/></svg></button>
                <button class="panel" aria-label="Hyperlinks"><svg class="icon28" viewBox="0 0 28 28"><circle cx="11" cy="11" r="10.500" fill="currentColor"/><path d="M6 1l3 5 5-1 1 4-5 1M9 11l3 9-4 3" fill="none" stroke="#323232" stroke-width="2.500"/><path d="M16 10q2-1 3 1l1 6 7 2q2 6-3 9h-5l-6-7q1-2 4-1z" fill="currentColor" stroke="#323232"/></svg></button>
                <button class="panel fx-large" aria-label="Effects">fx</button>
            </div>
            <div class="panel-group">
                <span class="grip"></span>
                <button class="panel pilcrow" aria-label="Paragraph">¶</button>
                <button class="panel pilcrow" aria-label="Paragraph styles"><svg class="icon14 low"><use href="#page-squares"/></svg>¶</button>
            </div>
            <div class="panel-group">
                <span class="grip"></span>
                <button class="panel character" aria-label="Character"><span class="caret">A</span></button>
                <button class="panel character" aria-label="Character styles"><svg class="icon14 low"><use href="#page-squares"/></svg>A</button>
            </div>
        </aside>
    </div>

    <footer class="taskbar">
        <button class="task sys" aria-label="Start"><svg class="icon20" viewBox="0 0 20 20"><path d="M0 3l8-1v8H0zM9 2l11-2v10H9zM0 11h8v8l-8-1zM9 11h11v9L9 19z"/></svg></button>
        <button class="task sys" aria-label="Task view"><svg class="icon20" viewBox="0 0 20 20"><path d="M1 1v3h12V1M1 7h12v8H1zM1 19v-2h12v2M18 0v4M18 11v9" fill="none" stroke="#111" stroke-width="1.200"/><path d="M16 6h4v3h-4z"/></svg></button>
        <div class="tasks">
            <button class="task" aria-label="File Explorer"><svg class="icon28" viewBox="0 0 28 28"><path d="M1 3h11l2 3h13v19H1z" fill="#fcd667"/><path d="M1 2h10l2 4H1z" fill="#dba21c"/><path d="M5 14h18v12h-5v-6h-8v6H5z" fill="#3f97d6"/></svg></button>
            <button class="task" aria-label="Excel"><svg class="icon30" viewBox="0 0 30 30"><path d="M8 1h11v14H8z" fill="#21a366"/><path d="M19 1h10v7H19z" fill="#33c481"/><path d="M8 15h21v14H8z" fill="#185c37"/><path d="M19 8h10v7H19zM19 15h10v7H19z" fill="#107c41"/><path d="M0 7h16v16H0z" fill="#107c41"/><text x="4" y="20" class="office">X</text></svg></button>
            <button class="task" aria-label="Word"><svg class="icon30" viewBox="0 0 30 30"><path d="M8 1h21v7H8z" fill="#41a5ee"/><path d="M8 8h21v7H8z" fill="#2b7cd3"/><path d="M8 15h21v7H8z" fill="#185abd"/><path d="M8 22h21v7H8z" fill="#103f91"/><path d="M0 7h16v16H0z" fill="#185abd"/><text x="2" y="20" class="office">W</text></svg></button>
            <button class="task" aria-label="PowerPoint"><svg class="icon30" viewBox="0 0 30 30"><circle cx="16" cy="15" r="14" fill="#d35230"/><path d="M16 1a14 14 0 0 1 14 14H16z" fill="#ff8f6b"/><path d="M16 1A14 14 0 0 0 2 15h14z" fill="#ed6c47"/><path d="M0 7h16v16H0z" fill="#c43e1c"/><text x="4" y="20" class="office">P</text></svg></button>
            <button class="task open"><span class="tile ai">Ai</span></button>
            <button class="task open many"><span class="tile id">Id</span></button>
            <button class="task open"><span class="tile ps">Ps</span></button>
            <button class="task open" aria-label="Acrobat"><span class="tile acrobat"><svg class="icon20" viewBox="0 0 20 20"><path d="M9 1q2 6 0 9-3 5-6 8-2-2 5-5 5-2 10-1 1 2-3 1-6-4-6-12z" fill="none" stroke="#fff" stroke-width="1.500"/></svg></span></button>
            <button class="task"><span class="tile au">Au</span></button>
            <button class="task"><span class="tile ae">Ae</span></button>
            <button class="task" aria-label="Media Encoder"><span class="tile me"><svg class="icon20" viewBox="0 0 20 20"><path d="M2 2l16 16H2z" fill="#b3a5f5"/><path d="M7 3h2v2H7zM12 3h2v2h-2zM10 6h2v2h-2zM15 6h2v2h-2zM13 9h2v2h-2zM16 12h2v2h-2z" fill="#8d80d8"/></svg></span></button>
            <button class="task"><span class="tile dw">Dw</span></button>
            <button class="task"><span class="tile fz">Fz</span></button>
            <button class="task"><span class="tile dn">Dn</span></button>
            <button class="task" aria-label="Creative Cloud"><span class="tile ccloud"><svg class="icon20" viewBox="0 0 20 20"><path d="M7 4a6 6 0 0 1 6-2 7.500 7.500 0 0 1 0 15H7A6 6 0 0 1 7 4zM13 13c-3-1-4-6-7-6a3 3 0 0 0 0 7h2M9 7q4-3 7 0 2 5-2 6-3 0-5-4" fill="none" stroke="#fff" stroke-width="1.300"/></svg></span></button>
            <button class="task" aria-label="Calculator"><svg class="icon30" viewBox="0 0 30 30"><path d="M4 0h22v30H4z" fill="#3b4147"/><path d="M6 2h18v5H6zM6 10h4l-3 4H6zM13 10h4l-3 4h-1zM20 10h4l-3 4h-1zM6 17h4l-3 4H6zM13 17h4l-3 4h-1zM20 17h4l-3 4h-1zM6 24h4l-3 4H6zM13 24h4l-3 4h-1zM20 24h4l-3 4h-1z" fill="#fff"/></svg></button>
            <button class="task open" aria-label="Firefox"><svg class="icon30" viewBox="0 0 30 30"><circle cx="15" cy="16" r="13.500" fill="url(#fox)"/><path d="M2 12L3 3l5 5z" fill="#ff4a3a"/><path d="M20 1q9 6 8 15l-8-4z" fill="#ffd83a"/><circle cx="16" cy="13" r="8" fill="#2b6fe0"/><path d="M4 8q7-1 11 3l-5 4q2 6 8 4 5-1 5-6 2 8-4 11-9 3-14-6z" fill="#ff8a1e"/></svg></button>
            <button class="task open" aria-label="Chrome"><svg class="chrome" viewBox="0 0 32 32"><circle cx="15" cy="15" r="14" fill="#fff"/><path d="M3 8a14 14 0 0 1 24 0H15a7 7 0 0 0-6 4z" fill="#de5144"/><path d="M27 8a14 14 0 0 1-12 21l6-10q2-6-4-11z" fill="#f7c846"/><path d="M3 8a14 14 0 0 0 12 21l5-9q-8 4-12-3z" fill="#55a860"/><circle cx="15" cy="15" r="6" fill="#4a86e8" stroke="#fff" stroke-width="1.500"/><circle cx="22" cy="22" r="10" fill="#1b1110"/><path d="M16 24l5-7 1 5 3-5 2 8-6-2z" fill="#c73a2a"/></svg></button>
            <button class="task" aria-label="VLC"><svg class="icon28" viewBox="0 0 28 28"><path d="M4 20h20l3 8H1z" fill="#f5921e"/><path d="M12 0h4l7 22q-9 5-18 0z" fill="#ef7d14"/><path d="M10.500 5h7l2 5h-11zM7 15h14l2 6q-9 4-18 0z" fill="#f3f3f3"/></svg></button>
            <button class="task" aria-label="Control panel"><svg class="icon28" viewBox="0 0 28 28"><path d="M1 6h26v17H1z" fill="#7fd0f5" stroke="#2c8cc4" stroke-width="1.500"/><circle cx="9" cy="13" r="4.500" fill="#fff"/><path d="M9 8.500a4.500 4.500 0 0 0-4 6l4-1.500z" fill="#f0a030"/><path d="M9 8.500V13h4.500a4.500 4.500 0 0 0-4.500-4.500zM17 10h7M18 13h6M17 16h7" fill="#2980c4" stroke="#2980c4" stroke-width="1.300"/><path d="M5 20h10" stroke="#e58d20" stroke-width="1.500"/></svg></button>
            <button class="task" aria-label="Notepad"><svg class="icon30" viewBox="0 0 30 30"><path d="M25 3l3 2-2 21-3 2z" fill="#a37d43"/><path d="M10 3l15 1-4 23L2 21z" fill="#8fcbd9"/><path d="M25 4l-4 23 5-3z" fill="#eef"/><path d="M11 4q-3 7-7 16l16 2" fill="#5eabc0" opacity=".5"/><path d="M11 3h14" stroke="#555" stroke-width="2" stroke-dasharray="1 1"/></svg></button>
            <button class="task open" aria-label="Cloud app"><svg class="icon30" viewBox="0 0 30 30"><path d="M15 4q4 1 6 6l7 8q3 5-2 6-3 1-5-2-3 4-6 0-3 4-6 0-3 3-6 1-3-3 0-7l6-7q3-4 6-5z" fill="#fff" stroke="#999"/></svg></button>
            <button class="task" aria-label="Sticky notes"><svg class="icon28" viewBox="0 0 28 28"><path d="M3 3h22v12H16v11H3z" fill="#3e3e3e"/><path d="M16 26V15h9z" fill="#fff"/><path d="M25 15v11h-9z" fill="#3e3e3e"/></svg></button>
            <button class="task open" aria-label="Outlook"><svg class="icon30" viewBox="0 0 30 30"><path d="M9 1h20v28H9z" fill="#1490df"/><path d="M9 1h20v5H9z" fill="#0a55a5"/><path d="M9 6h10v10H9z" fill="#0f6cbd"/><path d="M19 6h10v10H19z" fill="#35b8f1"/><path d="M9 16l10 6 10-6v13H9z" fill="#28a8ea"/><path d="M0 7h15v16H0z" fill="#0f6cbd"/><text x="2" y="20" class="office">O</text></svg></button>
            <button class="task" aria-label="Tropical app"><svg class="icon30" viewBox="0 0 30 30"><path d="M18 11l2-5-2-3 4 2 1-5 2 5 4-3-2 5 2 1-3 4z" fill="#278c32"/><ellipse cx="22" cy="18" rx="7" ry="8" fill="#c68a25"/><path d="M17 14l10 9M16 18l8 7M27 13l-9 10M29 17l-8 8" stroke="#79521b"/><path d="M1 9h13q0 8-5 10v6H6v-6q-5-2-5-10z" fill="#f4c7b0"/><path d="M1 10h13q0 7-5 9H6q-5-2-5-9z" fill="#e8402c"/><path d="M4 9L2 1M10 8l4-5" stroke="#d53da0" stroke-width="2"/><path d="M8 6l6-4 3 3z" fill="#41bd50"/><path d="M4 27h8" stroke="#eee" stroke-width="2"/></svg></button>
            <button class="task open" aria-label="Groove Music"><svg class="icon30" viewBox="0 0 30 30"><path d="M21 3a13.500 13.500 0 1 0 6 6l-5 3" fill="none" stroke="#43494d" stroke-width="3"/><circle cx="15" cy="15" r="4" fill="none" stroke="#43494d" stroke-width="4"/></svg></button>
        </div>
        <div class="tray">
            <span class="toolbar-name">Bureau</span>
            <span class="more">»</span>
            <button class="tray-btn" aria-label="Hidden icons"><svg class="icon20" viewBox="0 0 20 20"><path d="M2 14l8-8 8 8" fill="none" stroke="#111" stroke-width="1.500"/></svg></button>
            <button class="tray-btn" aria-label="OneDrive"><svg class="icon20" viewBox="0 0 20 20"><path d="M4 16q-4-2-3-5 1-3 4-3 3-5 8-3 2 1 3 4 4 1 3 5-1 2-3 2z" fill="#eee" stroke="#333"/><path d="M2 11q1-3 4-3 3-4 7-2 3 2 3 4l-7 4z" fill="#888"/></svg></button>
            <button class="tray-btn" aria-label="Network"><svg class="icon20" viewBox="0 0 20 20"><path d="M3 3h16v11H3zM10 14v4M6 18h9M1 3h4v5H1zM3 8v10" fill="none" stroke="#111" stroke-width="1.200"/></svg></button>
            <button class="tray-btn" aria-label="Volume"><svg class="icon20" viewBox="0 0 20 20"><path d="M1 7h3l4-4v14l-4-4H1zM11 7q2 3 0 6M14 5q3 5 0 10M17 3q4 7 0 14" fill="none" stroke="#111" stroke-width="1.200"/></svg></button>
            <button class="tray-btn" aria-label="Pen workspace"><svg class="icon20" viewBox="0 0 20 20"><path d="M5 17l2-5 8-11 3 2-8 11zM7 10q-7 1-6 6 2 4 5 0M14 8q7 0 5 4-2 3-4 0" fill="none" stroke="#111" stroke-width="1.400"/></svg></button>
            <span class="lang">FRA</span>
            <div class="clock"><span>17:41</span><span>16/09/2019</span></div>
            <button class="tray-btn notify" aria-label="Notifications"><svg class="icon22" viewBox="0 0 22 22"><path d="M1 2h20v15h-7l-3 3-3-3H1z" fill="none" stroke="#111" stroke-width="1.300"/></svg></button>
        </div>
    </footer>
</body>
</html>
```

FILE: styles.css
```css
:root {
    --bar: #323232;
    --edge: #262626;
    --field: #282828;
    --line: #4a4a4a;
    --icon: #b8b8b8;
    --text: #d6d6d6;
    --accent: #2d7d98;
}

* {
    box-sizing: border-box;
}

body {
    margin: 0;
    min-height: 100vh;
    display: flex;
    flex-direction: column;
    background: var(--bar);
    color: var(--text);
    font-family: "Open Sans", "Noto Sans", sans-serif;
    font-size: 14px;
}

button, input, select {
    font: inherit;
    color: inherit;
    background: none;
    border: 0;
    padding: 0;
    margin: 0;
}

svg {
    display: block;
    flex: none;
}

.defs {
    position: absolute;
    width: 0;
    height: 0;
}

.icon14 { width: 14px; height: 14px; }
.icon20 { width: 20px; height: 20px; }
.icon22 { width: 22px; height: 22px; }
.icon24 { width: 24px; height: 24px; }
.icon26 { width: 26px; height: 26px; }
.icon28 { width: 28px; height: 28px; }
.icon30 { width: 30px; height: 30px; }
.icon32 { width: 32px; height: 24px; }
.chrome { width: 32px; height: 32px; }
.chev { width: 12px; height: 8px; }
.chev-r { width: 8px; height: 12px; }

/* Menu bar */
.menubar {
    display: flex;
    align-items: center;
    height: 55px;
    border-bottom: 1px solid #222;
}

.logo {
    width: 71px;
    padding-left: 16px;
    color: #a8406c;
    font-family: Lato, sans-serif;
    font-size: 40px;
    font-weight: 700;
    line-height: 54px;
}

.menu {
    display: flex;
    font-size: 17px;
    padding-right: 9px;
    border-right: 3px solid #3c3c3c;
    line-height: 30px;
}

.menu a {
    padding: 0 13px;
    color: var(--text);
    text-decoration: none;
}

.menu-tools {
    display: flex;
    align-items: center;
    gap: 28px;
    padding: 0 18px 0 22px;
    border-right: 1px solid #262626;
    line-height: 28px;
}

.app-chip {
    width: 25px;
    height: 25px;
    background: var(--icon);
    color: #2e2e2e;
    font-size: 15px;
    font-weight: 600;
    line-height: 25px;
}

.select {
    position: relative;
    color: var(--text);
}

.select select {
    appearance: none;
    width: 100%;
    font-size: 17px;
    line-height: 24px;
}

.select .chev {
    position: absolute;
    right: 0;
    top: 9px;
    pointer-events: none;
}

.zoom {
    width: 98px;
}

.view-tools {
    display: flex;
    gap: 22px;
    padding-left: 15px;
    color: var(--icon);
}

.view-btn {
    display: flex;
    align-items: center;
    gap: 10px;
}

.menu-right {
    display: flex;
    align-items: center;
    align-self: stretch;
    margin-left: auto;
    padding-right: 5px;
}

.publish {
    display: flex;
    align-items: center;
    gap: 9px;
    height: 37px;
    width: 168px;
    padding-left: 15px;
    border: 2px solid #c4c4c4;
    border-radius: 19px;
    font-size: 15px;
}

.bulb {
    width: 69px;
    padding-left: 23px;
    height: 30px;
    color: var(--icon);
    border-right: 2px solid #2a2a2a;
}

.bulb svg {
    width: 20px;
    height: 30px;
}

.workspace-select {
    width: 139px;
    margin-left: 19px;
    color: #c0c0c0;
    border-right: 2px solid #2a2a2a;
}

.workspace-select .chev {
    right: 17px;
}

.search {
    display: flex;
    align-items: center;
    gap: 4px;
    width: 196px;
    height: 31px;
    margin-left: 13px;
    margin-right: 24px;
    padding-left: 6px;
    border: 2px solid #444;
    border-radius: 4px;
    background: var(--field);
    color: var(--icon);
}

.search svg {
    width: 28px;
    height: 20px;
}

.search input {
    width: 100px;
    flex: 1;
    outline: 0;
}

.search input::placeholder {
    color: #828282;
    opacity: 1;
}

.window-buttons {
    display: flex;
    align-self: flex-start;
    height: 28px;
    border: 1px solid #252525;
    border-radius: 0 0 4px 4px;
    color: #808080;
}

.window-buttons button {
    display: grid;
    place-items: center;
    width: 42px;
    border-right: 1px solid #252525;
}

.window-buttons button:last-child {
    width: 68px;
    border: 0;
}

.window-buttons svg {
    width: 20px;
    height: 16px;
}

/* Control panel */
.control {
    display: flex;
    height: 90px;
    padding: 9px 0;
    border-bottom: 1px solid #282828;
    color: var(--icon);
}

.group {
    display: grid;
    flex: none;
    grid-template-rows: 32px 32px;
    row-gap: 7px;
    align-items: center;
    align-content: start;
    justify-items: center;
    border-right: 1px solid #2b2b2b;
}

.group label {
    color: var(--text);
    justify-self: start;
}

.group label.end {
    justify-self: end;
    padding-right: 4px;
}

.group .field {
    justify-self: stretch;
}

.tall {
    grid-row: 1 / span 2;
}

.row {
    display: flex;
    align-items: center;
    height: 32px;
}

.flat, .toggled {
    display: grid;
    place-items: center;
    color: var(--icon);
}

.toggled {
    width: 34px;
    height: 36px;
    background: #1e1e1e;
    border: 1px solid #2a2a2a;
    border-radius: 4px;
}

.position {
    grid-template-columns: 34px 56px 20px 130px 39px 130px 52px;
    padding-left: 7px;
}

.position .grip-v { grid-column: 1; }
.position .ref-point { grid-column: 2; }
.position button.tall { grid-column: 7; }
.scale .tall { grid-column: 3; }
.transform .tall { grid-column: 3; }

.grip-v {
    justify-self: start;
    width: 5px;
    height: 30px;
    background: repeating-linear-gradient(#222 0 1px, var(--bar) 1px 3px);
}

.ref-point {
    justify-self: start;
    width: 38px;
    height: 38px;
}

.field {
    display: flex;
    height: 32px;
    border: 2px solid #444;
    border-radius: 4px;
    background: var(--field);
    color: #f0f0f0;
}

.field input {
    flex: 1;
    min-width: 0;
    padding: 0 6px;
    outline: 0;
}

.spin {
    display: flex;
    flex-direction: column;
    width: 25px;
    border-right: 1px solid var(--line);
    background: #2c2c2c;
    color: #c8c8c8;
}

.spin button {
    flex: 1;
    display: grid;
    place-items: center;
    min-height: 0;
}

.spin svg {
    width: 12px;
    height: 8px;
}

.drop {
    display: grid;
    place-items: center;
    width: 27px;
    border-left: 2px solid #404040;
    color: #c8c8c8;
}

.field.off .spin {
    color: #4a4a4a;
    background: #3a3a3a;
}

.scale {
    grid-template-columns: 28px 130px 52px 32px 130px;
    padding: 0 8px 0 12px;
}

.scale > .icon22,
.scale > .icon20 {
    justify-self: start;
}

.scale > .icon20 {
    margin-left: 4px;
}

.transform {
    grid-template-columns: 41px 41px 54px;
    padding: 0 4px 0 5px;
}

.proxy {
    width: 38px;
    height: 38px;
    background:
        linear-gradient(#eee, #eee) 0 0 / 6px 2px,
        linear-gradient(#eee, #eee) 0 0 / 2px 6px,
        linear-gradient(#eee, #eee) 100% 0 / 6px 2px,
        linear-gradient(#eee, #eee) 100% 0 / 2px 6px,
        linear-gradient(#eee, #eee) 0 100% / 6px 2px,
        linear-gradient(#eee, #eee) 0 100% / 2px 6px,
        linear-gradient(#eee, #eee) 100% 100% / 6px 2px,
        linear-gradient(#eee, #eee) 100% 100% / 2px 6px;
    background-repeat: no-repeat;
    color: #fff;
    font-family: "Liberation Serif", serif;
    font-size: 32px;
    line-height: 38px;
    text-align: center;
}

.hierarchy {
    grid-template-columns: 42px 42px;
    padding: 0 4px 0 3px;
}

.dim {
    color: #808080;
}

.fill {
    grid-template-columns: 35px 26px;
    padding: 0 8px 0 9px;
}

.swatch {
    justify-self: start;
}

.swatch svg {
    width: 29px;
    height: 29px;
}

.mixed path {
    fill: none;
    stroke: #fff;
    stroke-width: 2px;
}

.mixed text {
    fill: #bbb;
    font-size: 12px;
    font-weight: 700;
}

.box {
    display: grid;
    place-items: center;
    width: 26px;
    height: 32px;
    border: 2px solid #444;
    border-radius: 4px;
    background: #2b2b2b;
    color: #c8c8c8;
}

.stroke {
    grid-template-columns: 130px;
    padding: 0 9px 0 7px;
}

.preview {
    flex: 1;
    background: #e4e4e4;
    padding: 8px 6px;
}

.preview span {
    display: block;
    height: 100%;
}

.preview.line span {
    background: #000;
}

.preview.corner {
    padding: 3px 5px;
}

.preview.corner span {
    border-top: 2px solid #000;
    border-right: 2px solid #000;
}

.effects {
    justify-items: start;
    padding: 0 9px 0 4px;
}

.effects .flat {
    width: 43px;
}

.fx {
    font-size: 18px;
    font-style: italic;
    line-height: 24px;
}

.checker {
    margin: 0 7px;
}

.opacity {
    width: 105px;
}

.wrap {
    grid-template-columns: 41px 41px 44px 130px;
    padding: 0 9px 0 5px;
}

.fit {
    justify-items: stretch;
    padding: 0 2px 0 5px;
}

.fit .flat {
    width: 41px;
}

.mini-sep {
    width: 1px;
    height: 32px;
    margin: 0 5px;
    background: #2b2b2b;
}

.fit .autofit {
    display: flex;
    align-items: center;
    gap: 9px;
    flex: 1;
    padding-left: 8px;
}

.autofit input {
    appearance: none;
    width: 18px;
    height: 18px;
    border: 1px solid var(--icon);
    border-radius: 2px;
}

.align {
    grid-template-columns: 41px 41px 41px 46px;
    padding: 0 10px 0 6px;
}

.distribute {
    grid-template-columns: 41px 41px 41px;
    padding: 0 4px;
}

.quick {
    margin-left: auto;
    padding: 0 11px;
}

.settings {
    width: 43px;
    border: 0;
}

/* Tool column, canvas and panel dock */
.middle {
    display: flex;
    flex: 1;
}

.canvas {
    flex: 1;
    background: #0f0f0f;
}

.tools {
    display: flex;
    flex-direction: column;
    align-items: center;
    width: 61px;
    border: 1px solid #2a2a2a;
    border-width: 0 2px 0 1px;
}

.panel-head {
    align-self: stretch;
    height: 19px;
    padding: 0 8px;
    background: var(--edge);
    color: #ccc;
    font-size: 18px;
    line-height: 12px;
    text-align: left;
}

.grip {
    display: block;
    width: 29px;
    height: 6px;
    margin: 5px auto 4px;
    background: repeating-linear-gradient(90deg, #222 0 1px, var(--bar) 1px 3px);
}

.tools > .grip {
    margin-bottom: 11px;
}

.tool-group {
    display: flex;
    flex-direction: column;
    padding-bottom: 2px;
    margin-bottom: 1px;
    border-bottom: 1px solid #2a2a2a;
}

.tool {
    position: relative;
    display: grid;
    place-items: center;
    width: 43px;
    height: 36px;
    color: var(--icon);
}

.tool.on {
    height: 34px;
    margin: 1px 0;
    background: #1e1e1e;
    border: 1px solid #2b2b2b;
    border-radius: 4px;
}

.mark {
    position: absolute;
    right: 2px;
    bottom: 1px;
    width: 6px;
    height: 6px;
}

.swatch-mini {
    display: flex;
    gap: 5px;
    padding: 4px 0 6px;
}

.swatch-stack {
    position: relative;
    width: 43px;
    height: 45px;
}

.swatch-stack svg {
    position: absolute;
    width: 29px;
    height: 29px;
}

.fill-sw {
    left: 0;
    top: 0;
}

.stroke-sw {
    right: 0;
    bottom: 0;
}

.format-row {
    display: flex;
    gap: 3px;
    padding: 10px 0 9px;
}

.format {
    display: grid;
    place-items: center;
    width: 20px;
    height: 18px;
    color: var(--icon);
    border-radius: 3px;
}

.format.on {
    background: #1e1e1e;
}

.letter {
    font-family: "Liberation Serif", serif;
    font-size: 20px;
    font-weight: 700;
    line-height: 18px;
}

.tools > .apply {
    margin-bottom: 9px;
}

.panels {
    width: 60px;
    border-left: 3px solid #262626;
}

.panels .panel-head {
    display: block;
    width: 100%;
    text-align: right;
}

.panel-group {
    padding-bottom: 3px;
    border-bottom: 1px solid #222;
    overflow: hidden;
}

.panel {
    display: flex;
    align-items: center;
    justify-content: center;
    width: 57px;
    height: 42px;
    padding-left: 3px;
    color: var(--icon);
    line-height: 42px;
}

.script {
    font-family: "Liberation Serif", serif;
    font-style: italic;
    font-size: 32px;
}

.fx-large {
    font-style: italic;
    font-size: 25px;
}

.pilcrow {
    font-family: "Liberation Sans", sans-serif;
    font-size: 28px;
    font-weight: 700;
}

.character {
    font-size: 28px;
    font-weight: 600;
}

.caret {
    padding-right: 2px;
    border-right: 2px solid var(--icon);
    line-height: 28px;
}

.low {
    align-self: flex-end;
    margin-bottom: 6px;
}

/* Taskbar */
.taskbar {
    display: flex;
    height: 50px;
    background: #cbe1e6;
    color: #1a1a1a;
}

.tasks {
    display: flex;
    margin-left: 3px;
}

.task {
    display: grid;
    place-items: center;
    position: relative;
    width: 62px;
}

.task.sys {
    width: 60px;
}

.task.open::after {
    content: "";
    position: absolute;
    left: 6px;
    right: 5px;
    bottom: 0;
    height: 3px;
    background: var(--accent);
}

.task.many::after {
    background: linear-gradient(90deg, var(--accent) 80%, #86afbd 80%);
}

.office {
    fill: #fff;
    font-size: 13px;
    font-weight: 700;
}

.tile {
    display: grid;
    place-items: center;
    width: 28px;
    height: 28px;
    border: 2px solid;
    font-size: 15px;
    font-weight: 600;
    line-height: 22px;
    box-shadow: 0 1px 2px rgba(0, 0, 0, .4);
}

.ai { color: #f08a1c; background: #2a1404; border-color: #c9802f; }
.id { color: #ee3d8f; background: #2b0318; border-color: #d84f93; }
.ps { color: #25c1f0; background: #06202c; border-color: #25b5e0; }
.au { color: #19d3ae; background: #05291f; border-color: #26bd9d; }
.ae { color: #cf9bf4; background: #1f0538; border-color: #b287da; }
.me { background: #170b4e; border-color: #8d7edb; }
.dw { color: #8fe83a; background: #10230a; border-color: #68cf2d; font-size: 14px; }
.dn { color: #e4fff0; background: #052b1b; border-color: #54c295; border-radius: 4px; }
.acrobat { background: #2c1212; border-color: #c4342c; }
.ccloud { background: #d3151a; border-color: #c01216; }
.fz { color: #fff; background: #b30d0d; border: 1px dashed #fff; font-size: 19px; font-style: italic; font-weight: 700; }

.tray {
    display: flex;
    align-items: center;
    margin-left: auto;
    margin-right: 5px;
    padding-right: 14px;
    border-right: 1px solid #9fb4b9;
}

.toolbar-name {
    font-size: 13px;
}

.more {
    align-self: flex-start;
    margin: 0 6px 0 11px;
    color: #5a6ea8;
    font-size: 18px;
    line-height: 14px;
}

.tray-btn {
    display: grid;
    place-items: center;
    width: 30px;
    height: 50px;
}

.lang {
    margin: 0 19px 0 20px;
}

.clock {
    display: flex;
    flex-direction: column;
    align-items: center;
    line-height: 24px;
}

.notify {
    width: 40px;
    margin-left: 15px;
}
```
